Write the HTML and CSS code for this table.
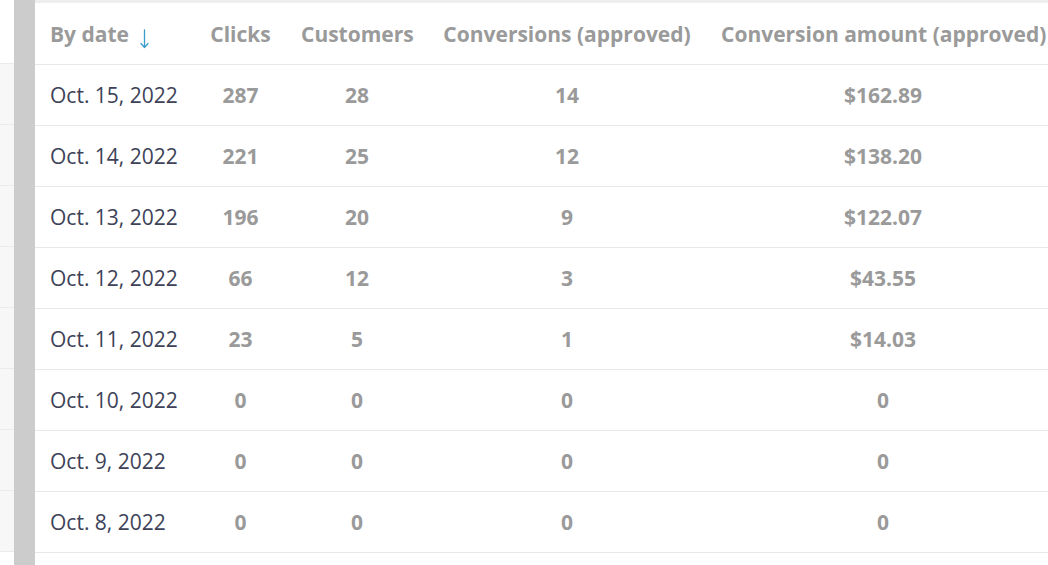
FILE: index.html
```html
<!DOCTYPE html>
<html>
<head>
<meta charset="utf-8">
<link rel="stylesheet" href="styles.css">
</head>
<body>
<div class="page">
  <div class="side">
    <div class="side-cell first"></div>
    <div class="side-cell"></div>
    <div class="side-cell"></div>
    <div class="side-cell"></div>
    <div class="side-cell"></div>
    <div class="side-cell"></div>
    <div class="side-cell"></div>
    <div class="side-cell"></div>
    <div class="side-cell"></div>
  </div>
  <div class="bar"></div>
  <div class="main">
    <table class="stats">
      <thead>
        <tr>
          <th class="c-date">By date <svg class="arrow" width="9" height="20" viewBox="0 0 9 20"><path d="M4.5 1 V18.5 M1 14.5 L4.5 18.5 L8 14.5" fill="none" stroke="#3b9ccb" stroke-width="1.3" stroke-linecap="round" stroke-linejoin="round"/></svg></th>
          <th class="c-clicks">Clicks</th>
          <th class="c-cust">Customers</th>
          <th class="c-conv">Conversions (approved)</th>
          <th class="c-amt">Conversion amount (approved)</th>
        </tr>
      </thead>
      <tbody>
        <tr><td class="date">Oct. 15, 2022</td><td>287</td><td>28</td><td>14</td><td>$162.89</td></tr>
        <tr><td class="date">Oct. 14, 2022</td><td>221</td><td>25</td><td>12</td><td>$138.20</td></tr>
        <tr><td class="date">Oct. 13, 2022</td><td>196</td><td>20</td><td>9</td><td>$122.07</td></tr>
        <tr><td class="date">Oct. 12, 2022</td><td>66</td><td>12</td><td>3</td><td>$43.55</td></tr>
        <tr><td class="date">Oct. 11, 2022</td><td>23</td><td>5</td><td>1</td><td>$14.03</td></tr>
        <tr><td class="date">Oct. 10, 2022</td><td>0</td><td>0</td><td>0</td><td>0</td></tr>
        <tr><td class="date">Oct. 9, 2022</td><td>0</td><td>0</td><td>0</td><td>0</td></tr>
        <tr><td class="date">Oct. 8, 2022</td><td>0</td><td>0</td><td>0</td><td>0</td></tr>
      </tbody>
    </table>
  </div>
</div>
</body>
</html>
```
FILE: styles.css
```css
html, body {
  margin: 0;
  padding: 0;
  background: #ffffff;
  overflow: hidden;
}
body {
  width: 1048px;
  height: 565px;
  font-family: "Open Sans", "Noto Sans", sans-serif;
}
.page {
  display: flex;
  height: 565px;
}
.side {
  width: 14px;
  flex: none;
  display: flex;
  flex-direction: column;
}
.side-cell {
  height: 60px;
  background: #f7f7f7;
  border-bottom: 1px solid #ebebeb;
}
.side-cell.first {
  height: 63px;
  background: #ffffff;
}
.bar {
  width: 21px;
  flex: none;
  background: #cccccc;
}
.main {
  flex: none;
  width: 1040px;
  border-top: 3px solid #eeeeee;
}
.stats {
  border-collapse: collapse;
  table-layout: fixed;
  width: 1025px;
}
.stats th, .stats td {
  padding: 0 15px;
  border-bottom: 1px solid #e8e8e8;
  text-align: center;
  white-space: nowrap;
  box-sizing: border-box;
  font-size: 21px;
  font-weight: 700;
  color: #9a9a9a;
}
.stats th {
  height: 61px;
  padding-top: 2px;
}
.stats td {
  height: 61px;
  padding-top: 1px;
}
.stats th.c-date, .stats td.date {
  text-align: left;
}
.stats td.date {
  font-weight: 400;
  color: #3d4258;
}
.c-date { width: 160px; }
.c-clicks { width: 91px; }
.c-cust { width: 142px; }
.c-conv { width: 278px; }
.c-amt { width: 354px; }
.arrow {
  margin-left: 6px;
  vertical-align: -7px;
}
```
